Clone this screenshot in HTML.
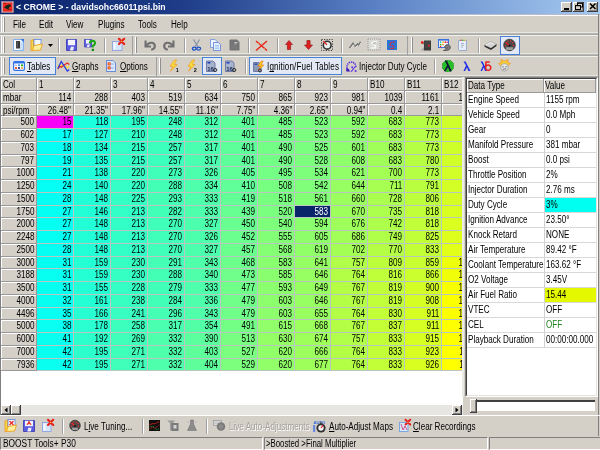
<!DOCTYPE html>
<html><head><meta charset="utf-8">
<style>
*{margin:0;padding:0;box-sizing:border-box}
html,body{width:600px;height:450px;overflow:hidden;background:#d4d0c8;font-family:"Liberation Sans",sans-serif;font-size:8px;color:#000}
.a{position:absolute}
.t{position:absolute;white-space:nowrap;line-height:10px;font-size:10px;transform:scaleX(0.81);transform-origin:0 0}
.hc{position:absolute;background:#d4d0c8;border-right:1px solid #999;border-bottom:1px solid #999;box-shadow:inset 1px 1px 0 #fff}
.dc{position:absolute;border-right:1px solid #b8c8c0;border-bottom:1px solid #b8c8c0}
.cell{position:absolute;white-space:nowrap;line-height:12px;text-align:right;padding-right:2px;font-size:10px;transform:scaleX(0.81);transform-origin:100% 0}
.sep{position:absolute;width:2px;border-left:1px solid #a0a0a0;border-right:1px solid #fff}
.grip{position:absolute;width:2px;border-left:1px solid #fff;border-right:1px solid #909090}
u{text-decoration-skip-ink:none}
.hot{position:absolute;border:1px solid #4a7fd8;background:#e2e8f4}
.rp{position:absolute;white-space:nowrap;line-height:14px;padding-left:3px}
</style></head><body><div style="position:absolute;left:0;top:0;width:600px;height:450px;will-change:transform">

<div class="a" style="left:0;top:0;width:600px;height:14px;background:linear-gradient(90deg,#0a246a 0%,#1e3c88 30%,#5a80c4 62%,#a6caf0 100%)"></div>
<div class="a" style="left:2px;top:1px;width:12px;height:12px;background:#c02020;border:1px solid #600"></div>
<div class="t" style="left:16px;top:2px;color:#fff;font-weight:bold;font-size:8.7px;transform:none">&lt; CROME &gt; - davidsohc66011psi.bin</div>
<div class="a" style="left:561px;top:2px;width:11px;height:10px;background:#d4d0c8;border-right:1px solid #404040;border-bottom:1px solid #404040;box-shadow:inset 1px 1px 0 #fff,inset -1px -1px 0 #808080"></div>
<div class="a" style="left:573px;top:2px;width:11px;height:10px;background:#d4d0c8;border-right:1px solid #404040;border-bottom:1px solid #404040;box-shadow:inset 1px 1px 0 #fff,inset -1px -1px 0 #808080"></div>
<div class="a" style="left:587px;top:2px;width:11px;height:10px;background:#d4d0c8;border-right:1px solid #404040;border-bottom:1px solid #404040;box-shadow:inset 1px 1px 0 #fff,inset -1px -1px 0 #808080"></div>
<div class="a" style="left:0;top:14px;width:600px;height:1px;background:#b8bcc8"></div>
<div class="a" style="left:1px;top:15px;width:597px;height:1px;background:#fff"></div>
<div class="a" style="left:0;top:15px;width:1px;height:62px;background:#c0c0c0"></div>
<div class="a" style="left:1px;top:15px;width:1px;height:62px;background:#fff"></div>
<div class="a" style="left:598px;top:14px;width:1px;height:422px;background:#808080"></div>
<div class="grip" style="left:3px;top:17px;height:15px"></div>
<div class="t" style="left:13px;top:20px">File</div>
<div class="t" style="left:39px;top:20px">Edit</div>
<div class="t" style="left:66px;top:20px">View</div>
<div class="t" style="left:98px;top:20px">Plugins</div>
<div class="t" style="left:138px;top:20px">Tools</div>
<div class="t" style="left:171px;top:20px">Help</div>
<div class="a" style="left:0;top:32px;width:598px;height:1px;background:#e6e6de"></div>
<div class="a" style="left:0;top:33px;width:598px;height:1px;background:#b8b8b4"></div>
<div class="a" style="left:0;top:34px;width:598px;height:1px;background:#a8a8a4"></div>
<div class="a" style="left:0;top:35px;width:598px;height:1px;background:#f0f0ea"></div>
<div class="a" style="left:0;top:53px;width:598px;height:1px;background:#e6e6de"></div>
<div class="a" style="left:0;top:54px;width:598px;height:1px;background:#b8b8b4"></div>
<div class="a" style="left:0;top:55px;width:598px;height:1px;background:#a8a8a4"></div>
<div class="a" style="left:0;top:56px;width:598px;height:1px;background:#f0f0ea"></div>
<div class="a" style="left:0;top:75px;width:598px;height:1px;background:#e6e6de"></div>
<div class="a" style="left:0;top:76px;width:598px;height:1px;background:#a8a8a4"></div>
<div class="grip" style="left:3px;top:37px;height:16px"></div>
<div class="grip" style="left:135px;top:37px;height:16px"></div>
<div class="grip" style="left:411px;top:37px;height:16px"></div>
<div class="a" style="left:132px;top:36px;width:1px;height:19px;background:#a0a0a0"></div>
<div class="a" style="left:407px;top:36px;width:1px;height:19px;background:#a0a0a0"></div>
<div class="sep" style="left:58px;top:38px;height:15px"></div>
<div class="sep" style="left:104px;top:38px;height:15px"></div>
<div class="sep" style="left:184px;top:38px;height:15px"></div>
<div class="sep" style="left:248px;top:38px;height:15px"></div>
<div class="sep" style="left:277px;top:38px;height:15px"></div>
<div class="sep" style="left:341px;top:38px;height:15px"></div>
<div class="sep" style="left:478px;top:38px;height:15px"></div>
<div class="hot" style="left:500px;top:36px;width:20px;height:19px"></div>
<div class="grip" style="left:3px;top:58px;height:16px"></div>
<div class="grip" style="left:159px;top:58px;height:16px"></div>
<div class="a" style="left:156px;top:57px;width:1px;height:19px;background:#a0a0a0"></div>
<div class="sep" style="left:245px;top:59px;height:15px"></div>
<div class="sep" style="left:434px;top:59px;height:15px"></div>
<div class="hot" style="left:9px;top:57px;width:47px;height:18px"></div>
<div class="hot" style="left:202px;top:57px;width:20px;height:18px"></div>
<div class="hot" style="left:249px;top:57px;width:93px;height:18px"></div>
<div class="t" style="left:27px;top:62px"><u>T</u>ables</div>
<div class="t" style="left:72px;top:62px"><u>G</u>raphs</div>
<div class="t" style="left:120px;top:62px"><u>O</u>ptions</div>
<div class="t" style="left:267px;top:62px"><span style="letter-spacing:0.15px">I<u>g</u>nition/Fuel Tables</span></div>
<div class="t" style="left:359px;top:62px">Injector Duty Cycle</div>
<svg class="a" style="left:1px;top:1px;overflow:visible" width="13" height="12" viewBox="0 0 13 12"><rect x="0.6" y="0.5" width="11.8" height="11" fill="#c8b8c8" stroke="#9890a8" stroke-width="0.7"/><rect x="1.8" y="1.5" width="9.6" height="9.2" fill="#ee2a20"/><path d="M3,6.5 L5,4.5 L8,3.2 L10,4 L9.5,5.5 L8,6.5 L7.5,9 L6,8 L4.5,7.2Z" fill="#102818"/><path d="M2.5,2.5 L5,2.5 M8,8.5 L10.5,8.5" stroke="#a01010" stroke-width="0.8"/></svg>
<svg class="a" style="left:561px;top:1px;overflow:visible" width="12" height="11" viewBox="0 0 12 11"><rect x="3" y="7" width="5" height="2" fill="#000"/></svg>
<svg class="a" style="left:573px;top:1px;overflow:visible" width="12" height="11" viewBox="0 0 12 11"><rect x="4.5" y="2" width="5" height="4" fill="none" stroke="#000" stroke-width="1"/><rect x="4" y="1.5" width="6" height="1.2" fill="#000"/><rect x="2.5" y="4.5" width="5" height="4" fill="#d4d0c8" stroke="#000" stroke-width="1"/><rect x="2" y="4" width="6" height="1.2" fill="#000"/></svg>
<svg class="a" style="left:587px;top:1px;overflow:visible" width="12" height="11" viewBox="0 0 12 11"><path d="M3,2.5 L8.5,8 M8.5,2.5 L3,8" stroke="#000" stroke-width="1.5"/></svg>
<svg class="a" style="left:13px;top:39px;overflow:visible" width="11" height="12" viewBox="0 0 11 12"><path d="M0.5,0.5 L8,0.5 L10.5,3 L10.5,11.5 L0.5,11.5Z" fill="#f6faff" stroke="#78aaf0" stroke-width="0.9"/><rect x="7" y="3" width="3" height="8" fill="#c8e0fa"/><rect x="3" y="2" width="4" height="7.5" fill="#383838"/><rect x="3.6" y="2.5" width="1" height="6" fill="#6a6a6a"/><path d="M7.5,0 L11,0 L11,3.5Z" fill="#3a78e8"/></svg>
<svg class="a" style="left:30px;top:39px;overflow:visible" width="13" height="12" viewBox="0 0 13 12"><path d="M1,1.5 L3.5,0.5 L3.5,11 L1,11.5Z" fill="#f8d848" stroke="#f09818" stroke-width="0.8"/><rect x="4" y="0.5" width="7" height="6.5" fill="#f2f8ff" stroke="#5a88e0" stroke-width="0.8"/><path d="M2.5,11.5 L4,6.5 L12.5,5 L10.5,11Z" fill="#faf0a0" stroke="#f0a018" stroke-width="0.9"/></svg>
<svg class="a" style="left:48px;top:44px;overflow:visible" width="5" height="3" viewBox="0 0 5 3"><path d="M0,0 L5,0 L2.5,3Z" fill="#000"/></svg>
<svg class="a" style="left:66px;top:39px;overflow:visible" width="11" height="12" viewBox="0 0 11 12"><path d="M0.5,0.5 L10.5,0.5 L10.5,11.5 L0.5,11.5Z" fill="#5c5ce0" stroke="#3434b0" stroke-width="0.8"/><rect x="2" y="0.8" width="7" height="5.4" fill="#f4f4fa"/><path d="M3.8,11.5 L5.0,7.8 L7.9,7.8 L7.2,11.5Z" fill="#f0f0f8"/></svg>
<svg class="a" style="left:84px;top:39px;overflow:visible" width="13" height="12" viewBox="0 0 13 12"><g><path d="M0.5,0.5 L7.5,0.5 L7.5,8.0 L0.5,8.0Z" fill="#6464e0" stroke="#4040b8" stroke-width="0.8"/><rect x="2" y="0.8" width="4" height="3.8" fill="#f4f4fa"/><path d="M2.8,8.0 L3.6,5.5 L5.8,5.5 L5.2,8.0Z" fill="#f0f0f8"/></g><path d="M5.8,4.3 Q6,1.8 8.5,1.8 Q11.2,2 11,4.5 Q10.5,6.3 8.8,6.8 L8.8,8.5" fill="none" stroke="#18a818" stroke-width="2.1"/><rect x="7.7" y="9.8" width="2.3" height="2.2" fill="#108810"/></svg>
<svg class="a" style="left:112px;top:38px;overflow:visible" width="13" height="13" viewBox="0 0 13 13"><rect x="0.5" y="3.5" width="9.5" height="9" fill="#d4e6fa" stroke="#8a9ae0" stroke-width="0.8"/><rect x="1.5" y="4.5" width="2" height="7" fill="#f4faff"/><path d="M7,0.8 L12.2,6 M12.2,0.8 L7,6" stroke="#e82018" stroke-width="2.2" stroke-linecap="round"/><circle cx="9.6" cy="3.4" r="0.7" fill="#f8c020"/></svg>
<svg class="a" style="left:144px;top:40px;overflow:visible" width="12" height="10" viewBox="0 0 12 10"><path d="M0.5,0.5 L2.6,0.5 L2.6,5.4 L7,5.4 L7,7.6 L0.5,7.6Z" fill="#707070"/><path d="M2,6 Q4.5,2.2 8.2,2.8 Q11.3,3.8 10.8,6.8 Q10.2,9.2 7.2,9.8" fill="none" stroke="#707070" stroke-width="2.1"/></svg>
<svg class="a" style="left:163px;top:40px;overflow:visible" width="12" height="10" viewBox="0 0 12 10"><g transform="translate(12,0) scale(-1,1)"><path d="M0.5,0.5 L2.6,0.5 L2.6,5.4 L7,5.4 L7,7.6 L0.5,7.6Z" fill="#707070"/><path d="M2,6 Q4.5,2.2 8.2,2.8 Q11.3,3.8 10.8,6.8 Q10.2,9.2 7.2,9.8" fill="none" stroke="#707070" stroke-width="2.1"/></g></svg>
<svg class="a" style="left:192px;top:39px;overflow:visible" width="9" height="12" viewBox="0 0 9 12"><path d="M1.5,0.5 L5.8,7.5 M7.5,0.5 L3.2,7.5" stroke="#8894a8" stroke-width="1.3"/><ellipse cx="2.3" cy="9.6" rx="1.9" ry="1.5" fill="none" stroke="#1a50c8" stroke-width="1.3"/><ellipse cx="6.7" cy="9.6" rx="1.9" ry="1.5" fill="none" stroke="#1a50c8" stroke-width="1.3"/></svg>
<svg class="a" style="left:210px;top:39px;overflow:visible" width="11" height="12" viewBox="0 0 11 12"><path d="M0.5,0.5 L5,0.5 L7,2.5 L7,8.5 L0.5,8.5Z" fill="#eef4ff" stroke="#6a8ee0" stroke-width="0.8"/><path d="M3.5,3.5 L8.5,3.5 L10.5,5.5 L10.5,11.5 L3.5,11.5Z" fill="#e4eefc" stroke="#5a80d8" stroke-width="0.8"/><path d="M5,6.5 L9,6.5 M5,8 L9,8 M5,9.5 L9,9.5" stroke="#90b4f0" stroke-width="0.7"/></svg>
<svg class="a" style="left:229px;top:39px;overflow:visible" width="11" height="12" viewBox="0 0 11 12"><path d="M1.5,0.5 L8,0.5 L10.5,3 L10.5,11.5 L1.5,11.5 Q0.5,11.5 0.5,10.5 L0.5,1.5 Q0.5,0.5 1.5,0.5Z" fill="#747474"/><path d="M5.5,3.5 L8.5,3.5 M5.5,4.8 L7.5,4.8" stroke="#d8d8d8" stroke-width="0.8"/><path d="M2,7 L9,7 M2,9 L9,9" stroke="#888" stroke-width="0.6"/></svg>
<svg class="a" style="left:255px;top:40px;overflow:visible" width="13" height="11" viewBox="0 0 13 11"><path d="M1,1 L12,10.5 M12,1 L1,10.5" stroke="#e82818" stroke-width="1.5"/><path d="M3,3 L4,4 M9,8 L10,9" stroke="#f8a030" stroke-width="0.8"/></svg>
<svg class="a" style="left:285px;top:40px;overflow:visible" width="8" height="10" viewBox="0 0 8 10"><path d="M4,0.5 L7.5,4.5 L5.6,4.5 L5.6,9.5 L2.4,9.5 L2.4,4.5 L0.5,4.5Z" fill="#e02020" stroke="#8a1010" stroke-width="0.6"/></svg>
<svg class="a" style="left:304px;top:40px;overflow:visible" width="9" height="10" viewBox="0 0 9 10"><path d="M4.5,9.5 L8.5,5 L6.1,5 L6.1,0.5 L2.9,0.5 L2.9,5 L0.5,5Z" fill="#e02020" stroke="#8a1010" stroke-width="0.6"/></svg>
<svg class="a" style="left:321px;top:39px;overflow:visible" width="12" height="12" viewBox="0 0 12 12"><rect x="0.5" y="0.5" width="11" height="11" fill="none" stroke="#202020" stroke-width="0.8" stroke-dasharray="1.2 1.3"/><circle cx="6.2" cy="6.2" r="3.9" fill="#e8f0f0" stroke="#303030" stroke-width="1.6"/><path d="M2.2,2.2 L6,5.8" stroke="#f02020" stroke-width="1.2"/></svg>
<svg class="a" style="left:349px;top:41px;overflow:visible" width="12" height="8" viewBox="0 0 12 8"><path d="M0.5,7.2 L4,2.2 L6,5.5 L8.7,2.8 L9.5,4.5 L11.5,0.8" fill="none" stroke="#6a6a6a" stroke-width="1.3"/><path d="M1.5,7.8 L4.5,3.5 L6.5,6.5 L9,4 L9.8,5.5 L11.8,2" fill="none" stroke="#fff" stroke-width="0.5" opacity="0.8"/></svg>
<svg class="a" style="left:368px;top:39px;overflow:visible" width="12" height="11" viewBox="0 0 12 11"><rect x="0" y="0" width="12" height="11" fill="#d8d8d4"/><path d="M0,0 h12 M0,11 h12 M0,0 v11 M12,0 v11" stroke="#9a9a9a" stroke-width="1" stroke-dasharray="1 1"/><path d="M9,2.5 Q3,2.5 4,5.2 Q9,6.5 7,9 L3,9" fill="none" stroke="#f8f8f8" stroke-width="1.6"/><path d="M8,3.5 Q4,3.8 5,5.6" fill="none" stroke="#909090" stroke-width="0.6"/></svg>
<svg class="a" style="left:387px;top:40px;overflow:visible" width="10" height="10" viewBox="0 0 10 10"><rect x="0" y="0" width="10" height="10" fill="#2a72e0"/><path d="M7.5,2 Q2,2 3.2,5 Q8.2,5.8 6.2,8.5 L2.5,8.5" fill="none" stroke="#e02828" stroke-width="1.3" stroke-dasharray="1.3 0.6"/><circle cx="1.8" cy="2" r="0.6" fill="#20b040"/><circle cx="8.5" cy="4" r="0.6" fill="#20b040"/><circle cx="1.8" cy="7" r="0.6" fill="#20b040"/><circle cx="8.3" cy="8.3" r="0.6" fill="#20b040"/></svg>
<svg class="a" style="left:420px;top:40px;overflow:visible" width="11" height="11" viewBox="0 0 11 11"><rect x="4" y="0.5" width="7" height="10" fill="#3c3c3c"/><path d="M5,3 h5 M5,5 h5 M5,7 h5" stroke="#5a5a5a" stroke-width="0.6"/><path d="M0.5,10.5 L4,7 L4,10.5Z" fill="#a8a8a8"/><path d="M1,2 L4,2 L4,4.5 L2,4" fill="#7a7a7a"/><circle cx="2.2" cy="2.4" r="1.3" fill="#f02020"/><circle cx="8.8" cy="5.6" r="1" fill="#f02020"/></svg>
<svg class="a" style="left:438px;top:39px;overflow:visible" width="13" height="12" viewBox="0 0 13 12"><rect x="0.5" y="0.5" width="10" height="8" fill="#f4f6ff" stroke="#3a70e0" stroke-width="1"/><rect x="0" y="0" width="11" height="1.6" fill="#3a70e0"/><circle cx="2.6" cy="3.2" r="0.9" fill="#20c8c0"/><circle cx="5" cy="3.2" r="0.9" fill="#f8c020"/><circle cx="7.4" cy="3.2" r="0.9" fill="#f02020"/><circle cx="9.3" cy="3.2" r="0.8" fill="#d03090"/><circle cx="2.6" cy="5.6" r="0.9" fill="#20c020"/><circle cx="5" cy="5.6" r="0.9" fill="#f09020"/><circle cx="2.6" cy="7.6" r="0.8" fill="#f02020"/><path d="M5.2,11.5 Q12.8,12 12.3,8 Q11.6,4.8 8.2,5.8 Q5.6,7.2 7.6,9.4 Q9.4,10 9.6,8.2" fill="#7c7c7c" stroke="#5c5c5c" stroke-width="1"/></svg>
<svg class="a" style="left:458px;top:39px;overflow:visible" width="9" height="12" viewBox="0 0 9 12"><path d="M0.5,1.5 L8.5,1.5 L8.5,11.5 L1.5,11.5 L0.5,10.5Z" fill="#e6ecf8" stroke="#8aa0c8" stroke-width="0.8"/><circle cx="3" cy="1.2" r="0.8" fill="#f04040"/><circle cx="4.8" cy="1.2" r="0.8" fill="#40c040"/><circle cx="6.5" cy="1.2" r="0.8" fill="#f0c020"/><path d="M3,4.5 L6,4.5 M3,6.3 L6,6.3 M3,8.1 L5,8.1" stroke="#a0b0c8" stroke-width="0.9"/></svg>
<svg class="a" style="left:484px;top:41px;overflow:visible" width="13" height="9" viewBox="0 0 13 9"><path d="M0.5,4.2 L6,0.5 L12.5,3.2 L7,7.2Z" fill="#d4d4d4" stroke="#9a9a9a" stroke-width="0.6"/><path d="M2,4 L6,1.5 L10,3.2" fill="none" stroke="#f4f4f4" stroke-width="0.8"/><path d="M0.5,4.2 L7,7.2 L12.5,3.2 L12.5,5 L7,9 L0.5,5.8Z" fill="#2c2c2c"/></svg>
<svg class="a" style="left:503px;top:39px;overflow:visible" width="13" height="12" viewBox="0 0 13 12"><circle cx="6.5" cy="6.0" r="5.8" fill="#4a4a4a" stroke="#2a2a2a" stroke-width="0.7"/><path d="M2.7,8.2 L10.3,8.2 L9.5,10.9 L3.5,10.9Z" fill="#a0a0a0"/><circle cx="2.46" cy="6.71" r="0.7" fill="#ff2a2a"/><circle cx="3.14" cy="3.65" r="0.7" fill="#ff2a2a"/><circle cx="5.10" cy="2.15" r="0.7" fill="#ff2a2a"/><circle cx="7.90" cy="2.15" r="0.7" fill="#ff2a2a"/><circle cx="9.86" cy="3.65" r="0.7" fill="#ff2a2a"/><circle cx="10.54" cy="6.71" r="0.7" fill="#ff2a2a"/><path d="M3.3,3.5 L6.5,6.5" stroke="#ff2020" stroke-width="1.1"/><circle cx="6.5" cy="6.5" r="1" fill="#101010"/></svg>
<svg class="a" style="left:13px;top:61px;overflow:visible" width="12" height="10" viewBox="0 0 12 10"><rect x="0.6" y="0.6" width="10.8" height="8.8" rx="1.4" fill="#fff" stroke="#2e72e8" stroke-width="1.2"/><rect x="0.6" y="0.6" width="10.8" height="2" rx="1" fill="#2e72e8"/><circle cx="3" cy="4.3" r="0.8" fill="#9090e8"/><circle cx="6" cy="4.3" r="1" fill="#2088e8"/><circle cx="9" cy="4.3" r="1.1" fill="#18a818"/><circle cx="3" cy="7" r="1.1" fill="#e83810"/><circle cx="6" cy="7" r="1.1" fill="#102080"/><circle cx="9" cy="7" r="1.1" fill="#f0a020"/></svg>
<svg class="a" style="left:57px;top:61px;overflow:visible" width="13" height="11" viewBox="0 0 13 11"><path d="M0.5,5 L3.8,4 L6.3,5.5 L8.8,5 L10.3,7 L12,5" fill="none" stroke="#f8e020" stroke-width="1.1"/><path d="M0.8,8 L2.8,5.3 L4.3,6.3 L7.3,4 L10.3,2 L12.3,3.5" fill="none" stroke="#e82020" stroke-width="1.1"/><path d="M0.8,7.5 L4.3,0.5 L10.3,10 L12.3,8.5" fill="none" stroke="#2838e8" stroke-width="1.3"/></svg>
<svg class="a" style="left:106px;top:60px;overflow:visible" width="10" height="12" viewBox="0 0 10 12"><path d="M0.5,0.5 L7,0.5 L9.5,3 L9.5,11.5 L0.5,11.5Z" fill="#dce8fc" stroke="#5a82d8" stroke-width="0.9"/><rect x="2" y="2.8" width="2.2" height="2.2" fill="#f8c020" stroke="#e02020" stroke-width="0.7"/><rect x="2" y="6.8" width="2.2" height="2.2" fill="#f8c020" stroke="#e02020" stroke-width="0.7"/><path d="M5,4 L8,4 M5,8 L8,8" stroke="#7aa0e0" stroke-width="0.8"/></svg>
<svg class="a" style="left:169px;top:60px;overflow:visible" width="11" height="12" viewBox="0 0 11 12"><path d="M5.5,0 L1,6.2 L4,6.2 L1.5,11.2 L8.2,4.6 L5.2,4.6 L7.6,0Z" fill="#f8e040" stroke="#f09818" stroke-width="0.7"/><text x="6.8" y="11.6" font-size="5.5" font-weight="bold" font-family="Liberation Sans" fill="#101010">1</text></svg>
<svg class="a" style="left:187px;top:60px;overflow:visible" width="11" height="12" viewBox="0 0 11 12"><path d="M5.5,0 L1,6.2 L4,6.2 L1.5,11.2 L8.2,4.6 L5.2,4.6 L7.6,0Z" fill="#f8e040" stroke="#f09818" stroke-width="0.7"/><text x="6.8" y="11.6" font-size="5.5" font-weight="bold" font-family="Liberation Sans" fill="#101010">2</text></svg>
<svg class="a" style="left:206px;top:60px;overflow:visible" width="11" height="12" viewBox="0 0 11 12"><path d="M0.5,1 L7,1 L9,3 L9,11.5 L0.5,11.5Z" fill="#a8b4cc" stroke="#5a6a98" stroke-width="0.8"/><rect x="1.5" y="2" width="3" height="1.5" fill="#2040c0"/><text x="1.3" y="10.8" font-size="6" font-weight="bold" font-family="Liberation Sans" fill="#18285a">1</text><text x="4.5" y="10.8" font-size="6" font-weight="bold" font-family="Liberation Sans" fill="#18285a">6</text><circle cx="9.2" cy="10" r="1.6" fill="none" stroke="#202020" stroke-width="0.9"/></svg>
<svg class="a" style="left:225px;top:60px;overflow:visible" width="11" height="12" viewBox="0 0 11 12"><path d="M0.5,1 L7,1 L9,3 L9,11.5 L0.5,11.5Z" fill="#a8b4cc" stroke="#5a6a98" stroke-width="0.8"/><rect x="1.5" y="2" width="3" height="1.5" fill="#2040c0"/><text x="1.3" y="10.8" font-size="6" font-weight="bold" font-family="Liberation Sans" fill="#18285a">1</text><text x="4.5" y="10.8" font-size="6" font-weight="bold" font-family="Liberation Sans" fill="#18285a">6</text><circle cx="9.2" cy="10" r="1.6" fill="none" stroke="#202020" stroke-width="0.9"/></svg>
<svg class="a" style="left:253px;top:61px;overflow:visible" width="11" height="11" viewBox="0 0 11 11"><path d="M0.5,1.5 L6,1.5 L8,3.5 L8,10.5 L0.5,10.5Z" fill="#8a9ab8" stroke="#5a6a98" stroke-width="0.8"/><rect x="1.5" y="2.5" width="3" height="1.5" fill="#3050b0"/><path d="M8.2,0 L5,5 L7.5,5 L5,10 L10.8,4 L8.2,4 L10.2,0Z" fill="#f8d020" stroke="#f07010" stroke-width="0.6"/><circle cx="7" cy="9.5" r="1.5" fill="none" stroke="#202020" stroke-width="0.8"/></svg>
<svg class="a" style="left:346px;top:61px;overflow:visible" width="11" height="11" viewBox="0 0 11 11"><path d="M3,9.2 A4.4,4.4 0 1,1 9.6,6.8" fill="none" stroke="#5a30e0" stroke-width="1.5" stroke-dasharray="1.4 0.7"/><path d="M0.3,6.2 L4.6,10.6 L0.3,10.6Z" fill="#3a18c0"/><path d="M9.8,5 L5.2,10.6" stroke="#5a30e0" stroke-width="1.1"/><circle cx="6.2" cy="6.2" r="1" fill="#5a30e0"/><circle cx="9.6" cy="10" r="1" fill="#5a30e0"/></svg>
<svg class="a" style="left:442px;top:60px;overflow:visible" width="12" height="12" viewBox="0 0 12 12"><path d="M3.5,0.5 L8.5,0.5 L11.5,3.5 L11.5,8.5 L8.5,11.5 L3.5,11.5 L0.5,8.5 L0.5,3.5Z" fill="#28c028" stroke="#108810" stroke-width="0.8" stroke-dasharray="1 0.5"/><path d="M2.8,0.8 L5,0.8 L9.8,11.2 L7.6,11.2 L6,7.2 L3.6,11.2 L1.8,11.2 L5.1,5.2Z" fill="#101838"/></svg>
<svg class="a" style="left:463px;top:61px;overflow:visible" width="8" height="10" viewBox="0 0 8 10"><path d="M0.5,0.5 L2.6,0.5 L7.5,10 L5.4,10 L4,6.6 L2,10 L0.5,10 L3,4.6Z" fill="#2030e8"/></svg>
<svg class="a" style="left:480px;top:61px;overflow:visible" width="11" height="10" viewBox="0 0 11 10"><path d="M0.5,0.5 L2.6,0.5 L7,10 L5,10 L3.8,6.6 L2,10 L0.5,10 L3,4.6Z" fill="#2030e8"/><path d="M9.8,0.9 L6,0.9 L5.6,5 M5.6,6.7 A2.6,2.6 0 1,0 10.8,6.7 A2.6,2.6 0 1,0 5.6,6.7" fill="none" stroke="#e82020" stroke-width="1.5"/></svg>
<svg class="a" style="left:498px;top:59px;overflow:visible" width="13" height="13" viewBox="0 0 13 13"><path d="M0.5,4.5 L3.5,3.5 L2.8,0.5 L6.5,2.2 L10,0.5 L9.6,3.5 L12.5,4.5 L10.2,6.5 L2.8,6.5Z" fill="#f8d030" stroke="#f09020" stroke-width="0.7"/><circle cx="6.5" cy="8.3" r="3.8" fill="#e4e4e4" stroke="#9a9a9a" stroke-width="0.7"/><circle cx="5" cy="7.8" r="0.6" fill="#404040"/><circle cx="8" cy="7.8" r="0.6" fill="#404040"/><path d="M4.8,10.3 L8.2,9.8" stroke="#404040" stroke-width="0.7"/></svg>
<svg class="a" style="left:4px;top:419px;overflow:visible" width="13" height="13" viewBox="0 0 13 13"><path d="M1,2 L3.5,1 L3.5,12 L1,12.5Z" fill="#f8d848" stroke="#f09818" stroke-width="0.8"/><rect x="4" y="0.5" width="7" height="7" fill="#f2f8ff" stroke="#5a88e0" stroke-width="0.8"/><path d="M5.5,2 L9.5,6 M9.5,2 L5.5,6" stroke="#e82020" stroke-width="1.1"/><path d="M2.5,12.5 L4,7.5 L12.5,6 L10.5,12Z" fill="#faf0a0" stroke="#f0a018" stroke-width="0.9"/></svg>
<svg class="a" style="left:23px;top:420px;overflow:visible" width="12" height="12" viewBox="0 0 12 12"><path d="M0.5,0.5 L11.5,0.5 L11.5,11.5 L0.5,11.5Z" fill="#5c5ce0" stroke="#3434b0" stroke-width="0.8"/><rect x="2" y="0.8" width="8" height="5.4" fill="#f4f4fa"/><path d="M4.2,11.5 L5.4,7.8 L8.6,7.8 L7.8,11.5Z" fill="#f0f0f8"/><path d="M4,5 L6,1.3 L8,5 M4.8,3.7 L7.2,3.7" stroke="#e82020" stroke-width="1" fill="none"/></svg>
<svg class="a" style="left:42px;top:419px;overflow:visible" width="12" height="13" viewBox="0 0 12 13"><rect x="0.5" y="3.5" width="8.5" height="9" fill="#d4e6fa" stroke="#8a9ae0" stroke-width="0.8"/><rect x="1.5" y="4.5" width="2" height="7" fill="#f4faff"/><path d="M6,0.8 L11.2,6 M11.2,0.8 L6,6" stroke="#e82018" stroke-width="2.2" stroke-linecap="round"/><circle cx="8.6" cy="3.4" r="0.7" fill="#f8c020"/></svg>
<svg class="a" style="left:69px;top:420px;overflow:visible" width="12" height="11" viewBox="0 0 12 11"><circle cx="6.0" cy="5.5" r="5.3" fill="#4a4a4a" stroke="#2a2a2a" stroke-width="0.7"/><path d="M2.7,7.7 L9.3,7.7 L8.5,9.9 L3.5,9.9Z" fill="#a0a0a0"/><circle cx="2.45" cy="6.13" r="0.7" fill="#ff2a2a"/><circle cx="3.05" cy="3.44" r="0.7" fill="#ff2a2a"/><circle cx="4.77" cy="2.12" r="0.7" fill="#ff2a2a"/><circle cx="7.23" cy="2.12" r="0.7" fill="#ff2a2a"/><circle cx="8.95" cy="3.44" r="0.7" fill="#ff2a2a"/><circle cx="9.55" cy="6.13" r="0.7" fill="#ff2a2a"/><path d="M2.8,3.0 L6.0,6.0" stroke="#ff2020" stroke-width="1.1"/><circle cx="6.0" cy="6.0" r="1" fill="#101010"/></svg>
<svg class="a" style="left:149px;top:420px;overflow:visible" width="11" height="11" viewBox="0 0 11 11"><rect x="0" y="0" width="11" height="11" fill="#101010"/><path d="M0.5,5 L3,3.5 L6,3.8 L10.5,1.5" stroke="#e82020" stroke-width="1.1" stroke-dasharray="1 0.6" fill="none"/><path d="M0.5,9 L3,7.5 L6,8 L10.5,5" stroke="#d82020" stroke-width="1" stroke-dasharray="1 0.8" fill="none"/><path d="M0.5,7 L4,6 L7,9.5 L10.5,8.8" stroke="#20b030" stroke-width="0.9" stroke-dasharray="1 1" fill="none"/></svg>
<svg class="a" style="left:167px;top:420px;overflow:visible" width="12" height="11" viewBox="0 0 12 11"><path d="M0,0.5 L8,0.5 L6,3 L6,10.5 L3,10.5 L3,3Z" fill="#9a9a9a"/><rect x="4.5" y="3" width="7" height="8" fill="#7a7a7a"/><rect x="6.5" y="5" width="3" height="3.5" fill="#d4d4d4"/></svg>
<svg class="a" style="left:187px;top:419px;overflow:visible" width="10" height="13" viewBox="0 0 10 13"><path d="M3.5,1 L6.5,1 L6.5,5 L9.5,11.5 L0.5,11.5 L3.5,5Z" fill="#8a8a8a" stroke="#777" stroke-width="0.6"/><path d="M0.5,2 L2,4 M9.5,2 L8,4" stroke="#b0b0b0" stroke-width="0.8"/></svg>
<svg class="a" style="left:213px;top:420px;overflow:visible" width="13" height="11" viewBox="0 0 13 11"><rect x="0.5" y="0.5" width="8" height="5" fill="#d8d8d8" stroke="#a0a0a0" stroke-width="0.8"/><path d="M1.5,2 h6 M1.5,3.5 h6" stroke="#b8b8b8" stroke-width="0.5"/><circle cx="8" cy="6.5" r="4.3" fill="#7c7c7c"/><circle cx="8" cy="6.5" r="2.2" fill="#8c8c8c"/></svg>
<svg class="a" style="left:313px;top:420px;overflow:visible" width="14" height="13" viewBox="0 0 14 13"><text x="0.5" y="4" font-size="4.2" font-weight="bold" font-family="Liberation Sans" fill="#3468d8">AUTO</text><rect x="0" y="5" width="2.2" height="7" fill="#6a8ae0"/><circle cx="8" cy="8" r="4.6" fill="#303030"/><circle cx="8" cy="8" r="2.7" fill="#f4f4f4"/><path d="M8,8 L10,5.3" stroke="#e82020" stroke-width="1.1"/><rect x="6.8" y="2.5" width="2.4" height="1.2" fill="#303030"/></svg>
<svg class="a" style="left:399px;top:419px;overflow:visible" width="12" height="13" viewBox="0 0 12 13"><rect x="0.5" y="3.5" width="8.5" height="9" fill="#d8e8f8" stroke="#6a9ae0" stroke-width="0.8"/><path d="M2,5 L4,11 L6,7 L8,11" fill="none" stroke="#d03070" stroke-width="0.8"/><path d="M6.5,0.8 L11.2,5.5 M11.2,0.8 L6.5,5.5" stroke="#e82020" stroke-width="2" stroke-linecap="round"/><circle cx="8.85" cy="3.15" r="0.6" fill="#f8c020"/></svg>
<div class="a" style="left:0;top:77px;width:463px;height:338px;background:#fff;border-left:1px solid #808080;border-top:1px solid #b8b8b4"></div>
<div class="a" style="left:0;top:77px;width:462px;height:295px;overflow:hidden">
<div class="hc" style="left:1px;top:1.0px;width:36px;height:12.75px"><div class="t" style="left:2px;top:2px">Col</div></div>
<div class="hc" style="left:1px;top:13.75px;width:36px;height:12.75px"><div class="t" style="left:2px;top:2px">mbar</div></div>
<div class="hc" style="left:1px;top:26.5px;width:36px;height:12.75px"><div class="t" style="left:2px;top:2px">psi/rpm</div></div>
<div class="hc" style="left:1px;top:39.25px;width:36px;height:12.75px"><div class="cell" style="right:0;top:0">500</div></div>
<div class="hc" style="left:1px;top:52.0px;width:36px;height:12.75px"><div class="cell" style="right:0;top:0">602</div></div>
<div class="hc" style="left:1px;top:64.75px;width:36px;height:12.75px"><div class="cell" style="right:0;top:0">703</div></div>
<div class="hc" style="left:1px;top:77.5px;width:36px;height:12.75px"><div class="cell" style="right:0;top:0">797</div></div>
<div class="hc" style="left:1px;top:90.25px;width:36px;height:12.75px"><div class="cell" style="right:0;top:0">1000</div></div>
<div class="hc" style="left:1px;top:103.0px;width:36px;height:12.75px"><div class="cell" style="right:0;top:0">1250</div></div>
<div class="hc" style="left:1px;top:115.75px;width:36px;height:12.75px"><div class="cell" style="right:0;top:0">1500</div></div>
<div class="hc" style="left:1px;top:128.5px;width:36px;height:12.75px"><div class="cell" style="right:0;top:0">1750</div></div>
<div class="hc" style="left:1px;top:141.25px;width:36px;height:12.75px"><div class="cell" style="right:0;top:0">2000</div></div>
<div class="hc" style="left:1px;top:154.0px;width:36px;height:12.75px"><div class="cell" style="right:0;top:0">2248</div></div>
<div class="hc" style="left:1px;top:166.75px;width:36px;height:12.75px"><div class="cell" style="right:0;top:0">2500</div></div>
<div class="hc" style="left:1px;top:179.5px;width:36px;height:12.75px"><div class="cell" style="right:0;top:0">3000</div></div>
<div class="hc" style="left:1px;top:192.25px;width:36px;height:12.75px"><div class="cell" style="right:0;top:0">3188</div></div>
<div class="hc" style="left:1px;top:205.0px;width:36px;height:12.75px"><div class="cell" style="right:0;top:0">3500</div></div>
<div class="hc" style="left:1px;top:217.75px;width:36px;height:12.75px"><div class="cell" style="right:0;top:0">4000</div></div>
<div class="hc" style="left:1px;top:230.5px;width:36px;height:12.75px"><div class="cell" style="right:0;top:0">4496</div></div>
<div class="hc" style="left:1px;top:243.25px;width:36px;height:12.75px"><div class="cell" style="right:0;top:0">5000</div></div>
<div class="hc" style="left:1px;top:256.0px;width:36px;height:12.75px"><div class="cell" style="right:0;top:0">6000</div></div>
<div class="hc" style="left:1px;top:268.75px;width:36px;height:12.75px"><div class="cell" style="right:0;top:0">7000</div></div>
<div class="hc" style="left:1px;top:281.5px;width:36px;height:12.75px"><div class="cell" style="right:0;top:0">7936</div></div>
<div class="hc" style="left:37px;top:1.0px;width:37px;height:12.75px"><div class="t" style="left:2px;top:2px">1</div></div>
<div class="hc" style="left:37px;top:13.75px;width:37px;height:12.75px"><div class="cell" style="right:0;top:1px">114</div></div>
<div class="hc" style="left:37px;top:26.5px;width:37px;height:12.75px"><div class="cell" style="right:0;top:1px">26.48"</div></div>
<div class="dc" style="left:37px;top:39.25px;width:37px;height:12.75px;background:#f800f8"><div class="cell" style="right:0;top:0;color:#000">15</div></div>
<div class="dc" style="left:37px;top:52.0px;width:37px;height:12.75px;background:#03fff6"><div class="cell" style="right:0;top:0;color:#000">17</div></div>
<div class="dc" style="left:37px;top:64.75px;width:37px;height:12.75px;background:#04fff5"><div class="cell" style="right:0;top:0;color:#000">18</div></div>
<div class="dc" style="left:37px;top:77.5px;width:37px;height:12.75px;background:#04fff5"><div class="cell" style="right:0;top:0;color:#000">19</div></div>
<div class="dc" style="left:37px;top:90.25px;width:37px;height:12.75px;background:#04fff5"><div class="cell" style="right:0;top:0;color:#000">21</div></div>
<div class="dc" style="left:37px;top:103.0px;width:37px;height:12.75px;background:#05fff4"><div class="cell" style="right:0;top:0;color:#000">24</div></div>
<div class="dc" style="left:37px;top:115.75px;width:37px;height:12.75px;background:#06fff3"><div class="cell" style="right:0;top:0;color:#000">28</div></div>
<div class="dc" style="left:37px;top:128.5px;width:37px;height:12.75px;background:#06fff3"><div class="cell" style="right:0;top:0;color:#000">27</div></div>
<div class="dc" style="left:37px;top:141.25px;width:37px;height:12.75px;background:#06fff3"><div class="cell" style="right:0;top:0;color:#000">27</div></div>
<div class="dc" style="left:37px;top:154.0px;width:37px;height:12.75px;background:#06fff3"><div class="cell" style="right:0;top:0;color:#000">27</div></div>
<div class="dc" style="left:37px;top:166.75px;width:37px;height:12.75px;background:#06fff3"><div class="cell" style="right:0;top:0;color:#000">28</div></div>
<div class="dc" style="left:37px;top:179.5px;width:37px;height:12.75px;background:#07fff2"><div class="cell" style="right:0;top:0;color:#000">31</div></div>
<div class="dc" style="left:37px;top:192.25px;width:37px;height:12.75px;background:#07fff2"><div class="cell" style="right:0;top:0;color:#000">31</div></div>
<div class="dc" style="left:37px;top:205.0px;width:37px;height:12.75px;background:#07fff2"><div class="cell" style="right:0;top:0;color:#000">31</div></div>
<div class="dc" style="left:37px;top:217.75px;width:37px;height:12.75px;background:#07fff2"><div class="cell" style="right:0;top:0;color:#000">32</div></div>
<div class="dc" style="left:37px;top:230.5px;width:37px;height:12.75px;background:#08fff1"><div class="cell" style="right:0;top:0;color:#000">35</div></div>
<div class="dc" style="left:37px;top:243.25px;width:37px;height:12.75px;background:#08fff1"><div class="cell" style="right:0;top:0;color:#000">38</div></div>
<div class="dc" style="left:37px;top:256.0px;width:37px;height:12.75px;background:#09fff0"><div class="cell" style="right:0;top:0;color:#000">41</div></div>
<div class="dc" style="left:37px;top:268.75px;width:37px;height:12.75px;background:#09fff0"><div class="cell" style="right:0;top:0;color:#000">42</div></div>
<div class="dc" style="left:37px;top:281.5px;width:37px;height:12.75px;background:#09fff0"><div class="cell" style="right:0;top:0;color:#000">42</div></div>
<div class="hc" style="left:74px;top:1.0px;width:37px;height:12.75px"><div class="t" style="left:2px;top:2px">2</div></div>
<div class="hc" style="left:74px;top:13.75px;width:37px;height:12.75px"><div class="cell" style="right:0;top:1px">288</div></div>
<div class="hc" style="left:74px;top:26.5px;width:37px;height:12.75px"><div class="cell" style="right:0;top:1px">21.35"</div></div>
<div class="dc" style="left:74px;top:39.25px;width:37px;height:12.75px;background:#1bffde"><div class="cell" style="right:0;top:0;color:#000">118</div></div>
<div class="dc" style="left:74px;top:52.0px;width:37px;height:12.75px;background:#1dffdc"><div class="cell" style="right:0;top:0;color:#000">127</div></div>
<div class="dc" style="left:74px;top:64.75px;width:37px;height:12.75px;background:#1fffda"><div class="cell" style="right:0;top:0;color:#000">134</div></div>
<div class="dc" style="left:74px;top:77.5px;width:37px;height:12.75px;background:#1fffda"><div class="cell" style="right:0;top:0;color:#000">135</div></div>
<div class="dc" style="left:74px;top:90.25px;width:37px;height:12.75px;background:#20ffd9"><div class="cell" style="right:0;top:0;color:#000">138</div></div>
<div class="dc" style="left:74px;top:103.0px;width:37px;height:12.75px;background:#20ffd9"><div class="cell" style="right:0;top:0;color:#000">140</div></div>
<div class="dc" style="left:74px;top:115.75px;width:37px;height:12.75px;background:#22ffd7"><div class="cell" style="right:0;top:0;color:#000">148</div></div>
<div class="dc" style="left:74px;top:128.5px;width:37px;height:12.75px;background:#22ffd7"><div class="cell" style="right:0;top:0;color:#000">146</div></div>
<div class="dc" style="left:74px;top:141.25px;width:37px;height:12.75px;background:#22ffd7"><div class="cell" style="right:0;top:0;color:#000">148</div></div>
<div class="dc" style="left:74px;top:154.0px;width:37px;height:12.75px;background:#22ffd7"><div class="cell" style="right:0;top:0;color:#000">148</div></div>
<div class="dc" style="left:74px;top:166.75px;width:37px;height:12.75px;background:#22ffd7"><div class="cell" style="right:0;top:0;color:#000">148</div></div>
<div class="dc" style="left:74px;top:179.5px;width:37px;height:12.75px;background:#25ffd4"><div class="cell" style="right:0;top:0;color:#000">159</div></div>
<div class="dc" style="left:74px;top:192.25px;width:37px;height:12.75px;background:#25ffd4"><div class="cell" style="right:0;top:0;color:#000">159</div></div>
<div class="dc" style="left:74px;top:205.0px;width:37px;height:12.75px;background:#24ffd5"><div class="cell" style="right:0;top:0;color:#000">155</div></div>
<div class="dc" style="left:74px;top:217.75px;width:37px;height:12.75px;background:#25ffd4"><div class="cell" style="right:0;top:0;color:#000">161</div></div>
<div class="dc" style="left:74px;top:230.5px;width:37px;height:12.75px;background:#27ffd2"><div class="cell" style="right:0;top:0;color:#000">166</div></div>
<div class="dc" style="left:74px;top:243.25px;width:37px;height:12.75px;background:#29ffd0"><div class="cell" style="right:0;top:0;color:#000">178</div></div>
<div class="dc" style="left:74px;top:256.0px;width:37px;height:12.75px;background:#2dffcc"><div class="cell" style="right:0;top:0;color:#000">192</div></div>
<div class="dc" style="left:74px;top:268.75px;width:37px;height:12.75px;background:#2dffcc"><div class="cell" style="right:0;top:0;color:#000">195</div></div>
<div class="dc" style="left:74px;top:281.5px;width:37px;height:12.75px;background:#2dffcc"><div class="cell" style="right:0;top:0;color:#000">195</div></div>
<div class="hc" style="left:111px;top:1.0px;width:37px;height:12.75px"><div class="t" style="left:2px;top:2px">3</div></div>
<div class="hc" style="left:111px;top:13.75px;width:37px;height:12.75px"><div class="cell" style="right:0;top:1px">403</div></div>
<div class="hc" style="left:111px;top:26.5px;width:37px;height:12.75px"><div class="cell" style="right:0;top:1px">17.96"</div></div>
<div class="dc" style="left:111px;top:39.25px;width:37px;height:12.75px;background:#2dffcc"><div class="cell" style="right:0;top:0;color:#000">195</div></div>
<div class="dc" style="left:111px;top:52.0px;width:37px;height:12.75px;background:#31ffc8"><div class="cell" style="right:0;top:0;color:#000">210</div></div>
<div class="dc" style="left:111px;top:64.75px;width:37px;height:12.75px;background:#32ffc7"><div class="cell" style="right:0;top:0;color:#000">215</div></div>
<div class="dc" style="left:111px;top:77.5px;width:37px;height:12.75px;background:#32ffc7"><div class="cell" style="right:0;top:0;color:#000">215</div></div>
<div class="dc" style="left:111px;top:90.25px;width:37px;height:12.75px;background:#33ffc6"><div class="cell" style="right:0;top:0;color:#000">220</div></div>
<div class="dc" style="left:111px;top:103.0px;width:37px;height:12.75px;background:#33ffc6"><div class="cell" style="right:0;top:0;color:#000">220</div></div>
<div class="dc" style="left:111px;top:115.75px;width:37px;height:12.75px;background:#34ffc5"><div class="cell" style="right:0;top:0;color:#000">225</div></div>
<div class="dc" style="left:111px;top:128.5px;width:37px;height:12.75px;background:#32ffc7"><div class="cell" style="right:0;top:0;color:#000">213</div></div>
<div class="dc" style="left:111px;top:141.25px;width:37px;height:12.75px;background:#32ffc7"><div class="cell" style="right:0;top:0;color:#000">213</div></div>
<div class="dc" style="left:111px;top:154.0px;width:37px;height:12.75px;background:#32ffc7"><div class="cell" style="right:0;top:0;color:#000">213</div></div>
<div class="dc" style="left:111px;top:166.75px;width:37px;height:12.75px;background:#32ffc7"><div class="cell" style="right:0;top:0;color:#000">213</div></div>
<div class="dc" style="left:111px;top:179.5px;width:37px;height:12.75px;background:#36ffc3"><div class="cell" style="right:0;top:0;color:#000">230</div></div>
<div class="dc" style="left:111px;top:192.25px;width:37px;height:12.75px;background:#36ffc3"><div class="cell" style="right:0;top:0;color:#000">230</div></div>
<div class="dc" style="left:111px;top:205.0px;width:37px;height:12.75px;background:#35ffc4"><div class="cell" style="right:0;top:0;color:#000">228</div></div>
<div class="dc" style="left:111px;top:217.75px;width:37px;height:12.75px;background:#37ffc2"><div class="cell" style="right:0;top:0;color:#000">238</div></div>
<div class="dc" style="left:111px;top:230.5px;width:37px;height:12.75px;background:#38ffc1"><div class="cell" style="right:0;top:0;color:#000">241</div></div>
<div class="dc" style="left:111px;top:243.25px;width:37px;height:12.75px;background:#3cffbd"><div class="cell" style="right:0;top:0;color:#000">258</div></div>
<div class="dc" style="left:111px;top:256.0px;width:37px;height:12.75px;background:#3fffba"><div class="cell" style="right:0;top:0;color:#000">269</div></div>
<div class="dc" style="left:111px;top:268.75px;width:37px;height:12.75px;background:#3fffba"><div class="cell" style="right:0;top:0;color:#000">271</div></div>
<div class="dc" style="left:111px;top:281.5px;width:37px;height:12.75px;background:#3fffba"><div class="cell" style="right:0;top:0;color:#000">271</div></div>
<div class="hc" style="left:148px;top:1.0px;width:37px;height:12.75px"><div class="t" style="left:2px;top:2px">4</div></div>
<div class="hc" style="left:148px;top:13.75px;width:37px;height:12.75px"><div class="cell" style="right:0;top:1px">519</div></div>
<div class="hc" style="left:148px;top:26.5px;width:37px;height:12.75px"><div class="cell" style="right:0;top:1px">14.55"</div></div>
<div class="dc" style="left:148px;top:39.25px;width:37px;height:12.75px;background:#3affbf"><div class="cell" style="right:0;top:0;color:#000">248</div></div>
<div class="dc" style="left:148px;top:52.0px;width:37px;height:12.75px;background:#3affbf"><div class="cell" style="right:0;top:0;color:#000">248</div></div>
<div class="dc" style="left:148px;top:64.75px;width:37px;height:12.75px;background:#3cffbd"><div class="cell" style="right:0;top:0;color:#000">257</div></div>
<div class="dc" style="left:148px;top:77.5px;width:37px;height:12.75px;background:#3cffbd"><div class="cell" style="right:0;top:0;color:#000">257</div></div>
<div class="dc" style="left:148px;top:90.25px;width:37px;height:12.75px;background:#40ffb9"><div class="cell" style="right:0;top:0;color:#000">273</div></div>
<div class="dc" style="left:148px;top:103.0px;width:37px;height:12.75px;background:#43ffb6"><div class="cell" style="right:0;top:0;color:#000">288</div></div>
<div class="dc" style="left:148px;top:115.75px;width:37px;height:12.75px;background:#44ffb5"><div class="cell" style="right:0;top:0;color:#000">293</div></div>
<div class="dc" style="left:148px;top:128.5px;width:37px;height:12.75px;background:#42ffb7"><div class="cell" style="right:0;top:0;color:#000">282</div></div>
<div class="dc" style="left:148px;top:141.25px;width:37px;height:12.75px;background:#3fffba"><div class="cell" style="right:0;top:0;color:#000">270</div></div>
<div class="dc" style="left:148px;top:154.0px;width:37px;height:12.75px;background:#3fffba"><div class="cell" style="right:0;top:0;color:#000">270</div></div>
<div class="dc" style="left:148px;top:166.75px;width:37px;height:12.75px;background:#3fffba"><div class="cell" style="right:0;top:0;color:#000">270</div></div>
<div class="dc" style="left:148px;top:179.5px;width:37px;height:12.75px;background:#44ffb5"><div class="cell" style="right:0;top:0;color:#000">291</div></div>
<div class="dc" style="left:148px;top:192.25px;width:37px;height:12.75px;background:#43ffb6"><div class="cell" style="right:0;top:0;color:#000">288</div></div>
<div class="dc" style="left:148px;top:205.0px;width:37px;height:12.75px;background:#41ffb8"><div class="cell" style="right:0;top:0;color:#000">279</div></div>
<div class="dc" style="left:148px;top:217.75px;width:37px;height:12.75px;background:#42ffb7"><div class="cell" style="right:0;top:0;color:#000">284</div></div>
<div class="dc" style="left:148px;top:230.5px;width:37px;height:12.75px;background:#45ffb4"><div class="cell" style="right:0;top:0;color:#000">296</div></div>
<div class="dc" style="left:148px;top:243.25px;width:37px;height:12.75px;background:#4affaf"><div class="cell" style="right:0;top:0;color:#000">317</div></div>
<div class="dc" style="left:148px;top:256.0px;width:37px;height:12.75px;background:#4effab"><div class="cell" style="right:0;top:0;color:#000">332</div></div>
<div class="dc" style="left:148px;top:268.75px;width:37px;height:12.75px;background:#4effab"><div class="cell" style="right:0;top:0;color:#000">332</div></div>
<div class="dc" style="left:148px;top:281.5px;width:37px;height:12.75px;background:#4effab"><div class="cell" style="right:0;top:0;color:#000">332</div></div>
<div class="hc" style="left:185px;top:1.0px;width:36px;height:12.75px"><div class="t" style="left:2px;top:2px">5</div></div>
<div class="hc" style="left:185px;top:13.75px;width:36px;height:12.75px"><div class="cell" style="right:0;top:1px">634</div></div>
<div class="hc" style="left:185px;top:26.5px;width:36px;height:12.75px"><div class="cell" style="right:0;top:1px">11.16"</div></div>
<div class="dc" style="left:185px;top:39.25px;width:36px;height:12.75px;background:#49ffb0"><div class="cell" style="right:0;top:0;color:#000">312</div></div>
<div class="dc" style="left:185px;top:52.0px;width:36px;height:12.75px;background:#49ffb0"><div class="cell" style="right:0;top:0;color:#000">312</div></div>
<div class="dc" style="left:185px;top:64.75px;width:36px;height:12.75px;background:#4affaf"><div class="cell" style="right:0;top:0;color:#000">317</div></div>
<div class="dc" style="left:185px;top:77.5px;width:36px;height:12.75px;background:#4affaf"><div class="cell" style="right:0;top:0;color:#000">317</div></div>
<div class="dc" style="left:185px;top:90.25px;width:36px;height:12.75px;background:#4cffad"><div class="cell" style="right:0;top:0;color:#000">326</div></div>
<div class="dc" style="left:185px;top:103.0px;width:36px;height:12.75px;background:#4effab"><div class="cell" style="right:0;top:0;color:#000">334</div></div>
<div class="dc" style="left:185px;top:115.75px;width:36px;height:12.75px;background:#4effab"><div class="cell" style="right:0;top:0;color:#000">333</div></div>
<div class="dc" style="left:185px;top:128.5px;width:36px;height:12.75px;background:#4effab"><div class="cell" style="right:0;top:0;color:#000">333</div></div>
<div class="dc" style="left:185px;top:141.25px;width:36px;height:12.75px;background:#4cffad"><div class="cell" style="right:0;top:0;color:#000">327</div></div>
<div class="dc" style="left:185px;top:154.0px;width:36px;height:12.75px;background:#4cffad"><div class="cell" style="right:0;top:0;color:#000">326</div></div>
<div class="dc" style="left:185px;top:166.75px;width:36px;height:12.75px;background:#4cffad"><div class="cell" style="right:0;top:0;color:#000">327</div></div>
<div class="dc" style="left:185px;top:179.5px;width:36px;height:12.75px;background:#50ffa9"><div class="cell" style="right:0;top:0;color:#000">343</div></div>
<div class="dc" style="left:185px;top:192.25px;width:36px;height:12.75px;background:#4fffaa"><div class="cell" style="right:0;top:0;color:#000">340</div></div>
<div class="dc" style="left:185px;top:205.0px;width:36px;height:12.75px;background:#4effab"><div class="cell" style="right:0;top:0;color:#000">333</div></div>
<div class="dc" style="left:185px;top:217.75px;width:36px;height:12.75px;background:#4effab"><div class="cell" style="right:0;top:0;color:#000">336</div></div>
<div class="dc" style="left:185px;top:230.5px;width:36px;height:12.75px;background:#50ffa9"><div class="cell" style="right:0;top:0;color:#000">343</div></div>
<div class="dc" style="left:185px;top:243.25px;width:36px;height:12.75px;background:#53ffa6"><div class="cell" style="right:0;top:0;color:#000">354</div></div>
<div class="dc" style="left:185px;top:256.0px;width:36px;height:12.75px;background:#5bff9e"><div class="cell" style="right:0;top:0;color:#000">390</div></div>
<div class="dc" style="left:185px;top:268.75px;width:36px;height:12.75px;background:#5eff9b"><div class="cell" style="right:0;top:0;color:#000">403</div></div>
<div class="dc" style="left:185px;top:281.5px;width:36px;height:12.75px;background:#5eff9b"><div class="cell" style="right:0;top:0;color:#000">404</div></div>
<div class="hc" style="left:221px;top:1.0px;width:37px;height:12.75px"><div class="t" style="left:2px;top:2px">6</div></div>
<div class="hc" style="left:221px;top:13.75px;width:37px;height:12.75px"><div class="cell" style="right:0;top:1px">750</div></div>
<div class="hc" style="left:221px;top:26.5px;width:37px;height:12.75px"><div class="cell" style="right:0;top:1px">7.75"</div></div>
<div class="dc" style="left:221px;top:39.25px;width:37px;height:12.75px;background:#5eff9b"><div class="cell" style="right:0;top:0;color:#000">401</div></div>
<div class="dc" style="left:221px;top:52.0px;width:37px;height:12.75px;background:#5eff9b"><div class="cell" style="right:0;top:0;color:#000">401</div></div>
<div class="dc" style="left:221px;top:64.75px;width:37px;height:12.75px;background:#5eff9b"><div class="cell" style="right:0;top:0;color:#000">401</div></div>
<div class="dc" style="left:221px;top:77.5px;width:37px;height:12.75px;background:#5eff9b"><div class="cell" style="right:0;top:0;color:#000">401</div></div>
<div class="dc" style="left:221px;top:90.25px;width:37px;height:12.75px;background:#5fff9a"><div class="cell" style="right:0;top:0;color:#000">405</div></div>
<div class="dc" style="left:221px;top:103.0px;width:37px;height:12.75px;background:#60ff99"><div class="cell" style="right:0;top:0;color:#000">410</div></div>
<div class="dc" style="left:221px;top:115.75px;width:37px;height:12.75px;background:#62ff97"><div class="cell" style="right:0;top:0;color:#000">419</div></div>
<div class="dc" style="left:221px;top:128.5px;width:37px;height:12.75px;background:#67ff92"><div class="cell" style="right:0;top:0;color:#000">439</div></div>
<div class="dc" style="left:221px;top:141.25px;width:37px;height:12.75px;background:#69ff90"><div class="cell" style="right:0;top:0;color:#000">450</div></div>
<div class="dc" style="left:221px;top:154.0px;width:37px;height:12.75px;background:#6aff8f"><div class="cell" style="right:0;top:0;color:#000">452</div></div>
<div class="dc" style="left:221px;top:166.75px;width:37px;height:12.75px;background:#6bff8e"><div class="cell" style="right:0;top:0;color:#000">457</div></div>
<div class="dc" style="left:221px;top:179.5px;width:37px;height:12.75px;background:#6dff8c"><div class="cell" style="right:0;top:0;color:#000">468</div></div>
<div class="dc" style="left:221px;top:192.25px;width:37px;height:12.75px;background:#6fff8a"><div class="cell" style="right:0;top:0;color:#000">473</div></div>
<div class="dc" style="left:221px;top:205.0px;width:37px;height:12.75px;background:#70ff89"><div class="cell" style="right:0;top:0;color:#000">477</div></div>
<div class="dc" style="left:221px;top:217.75px;width:37px;height:12.75px;background:#70ff89"><div class="cell" style="right:0;top:0;color:#000">479</div></div>
<div class="dc" style="left:221px;top:230.5px;width:37px;height:12.75px;background:#70ff89"><div class="cell" style="right:0;top:0;color:#000">479</div></div>
<div class="dc" style="left:221px;top:243.25px;width:37px;height:12.75px;background:#73ff86"><div class="cell" style="right:0;top:0;color:#000">491</div></div>
<div class="dc" style="left:221px;top:256.0px;width:37px;height:12.75px;background:#78ff81"><div class="cell" style="right:0;top:0;color:#000">513</div></div>
<div class="dc" style="left:221px;top:268.75px;width:37px;height:12.75px;background:#7bff7e"><div class="cell" style="right:0;top:0;color:#000">527</div></div>
<div class="dc" style="left:221px;top:281.5px;width:37px;height:12.75px;background:#7cff7d"><div class="cell" style="right:0;top:0;color:#000">529</div></div>
<div class="hc" style="left:258px;top:1.0px;width:37px;height:12.75px"><div class="t" style="left:2px;top:2px">7</div></div>
<div class="hc" style="left:258px;top:13.75px;width:37px;height:12.75px"><div class="cell" style="right:0;top:1px">865</div></div>
<div class="hc" style="left:258px;top:26.5px;width:37px;height:12.75px"><div class="cell" style="right:0;top:1px">4.36"</div></div>
<div class="dc" style="left:258px;top:39.25px;width:37px;height:12.75px;background:#71ff88"><div class="cell" style="right:0;top:0;color:#000">485</div></div>
<div class="dc" style="left:258px;top:52.0px;width:37px;height:12.75px;background:#71ff88"><div class="cell" style="right:0;top:0;color:#000">485</div></div>
<div class="dc" style="left:258px;top:64.75px;width:37px;height:12.75px;background:#73ff86"><div class="cell" style="right:0;top:0;color:#000">490</div></div>
<div class="dc" style="left:258px;top:77.5px;width:37px;height:12.75px;background:#73ff86"><div class="cell" style="right:0;top:0;color:#000">490</div></div>
<div class="dc" style="left:258px;top:90.25px;width:37px;height:12.75px;background:#74ff85"><div class="cell" style="right:0;top:0;color:#000">495</div></div>
<div class="dc" style="left:258px;top:103.0px;width:37px;height:12.75px;background:#77ff82"><div class="cell" style="right:0;top:0;color:#000">508</div></div>
<div class="dc" style="left:258px;top:115.75px;width:37px;height:12.75px;background:#79ff80"><div class="cell" style="right:0;top:0;color:#000">518</div></div>
<div class="dc" style="left:258px;top:128.5px;width:37px;height:12.75px;background:#7aff7f"><div class="cell" style="right:0;top:0;color:#000">520</div></div>
<div class="dc" style="left:258px;top:141.25px;width:37px;height:12.75px;background:#7eff7b"><div class="cell" style="right:0;top:0;color:#000">540</div></div>
<div class="dc" style="left:258px;top:154.0px;width:37px;height:12.75px;background:#82ff77"><div class="cell" style="right:0;top:0;color:#000">555</div></div>
<div class="dc" style="left:258px;top:166.75px;width:37px;height:12.75px;background:#85ff74"><div class="cell" style="right:0;top:0;color:#000">568</div></div>
<div class="dc" style="left:258px;top:179.5px;width:37px;height:12.75px;background:#89ff70"><div class="cell" style="right:0;top:0;color:#000">583</div></div>
<div class="dc" style="left:258px;top:192.25px;width:37px;height:12.75px;background:#89ff70"><div class="cell" style="right:0;top:0;color:#000">585</div></div>
<div class="dc" style="left:258px;top:205.0px;width:37px;height:12.75px;background:#8bff6e"><div class="cell" style="right:0;top:0;color:#000">593</div></div>
<div class="dc" style="left:258px;top:217.75px;width:37px;height:12.75px;background:#8dff6c"><div class="cell" style="right:0;top:0;color:#000">603</div></div>
<div class="dc" style="left:258px;top:230.5px;width:37px;height:12.75px;background:#8dff6c"><div class="cell" style="right:0;top:0;color:#000">603</div></div>
<div class="dc" style="left:258px;top:243.25px;width:37px;height:12.75px;background:#90ff69"><div class="cell" style="right:0;top:0;color:#000">615</div></div>
<div class="dc" style="left:258px;top:256.0px;width:37px;height:12.75px;background:#94ff65"><div class="cell" style="right:0;top:0;color:#000">630</div></div>
<div class="dc" style="left:258px;top:268.75px;width:37px;height:12.75px;background:#91ff68"><div class="cell" style="right:0;top:0;color:#000">620</div></div>
<div class="dc" style="left:258px;top:281.5px;width:37px;height:12.75px;background:#91ff68"><div class="cell" style="right:0;top:0;color:#000">620</div></div>
<div class="hc" style="left:295px;top:1.0px;width:36px;height:12.75px"><div class="t" style="left:2px;top:2px">8</div></div>
<div class="hc" style="left:295px;top:13.75px;width:36px;height:12.75px"><div class="cell" style="right:0;top:1px">923</div></div>
<div class="hc" style="left:295px;top:26.5px;width:36px;height:12.75px"><div class="cell" style="right:0;top:1px">2.65"</div></div>
<div class="dc" style="left:295px;top:39.25px;width:36px;height:12.75px;background:#7aff7f"><div class="cell" style="right:0;top:0;color:#000">523</div></div>
<div class="dc" style="left:295px;top:52.0px;width:36px;height:12.75px;background:#7aff7f"><div class="cell" style="right:0;top:0;color:#000">523</div></div>
<div class="dc" style="left:295px;top:64.75px;width:36px;height:12.75px;background:#7bff7e"><div class="cell" style="right:0;top:0;color:#000">525</div></div>
<div class="dc" style="left:295px;top:77.5px;width:36px;height:12.75px;background:#7cff7d"><div class="cell" style="right:0;top:0;color:#000">528</div></div>
<div class="dc" style="left:295px;top:90.25px;width:36px;height:12.75px;background:#7dff7c"><div class="cell" style="right:0;top:0;color:#000">534</div></div>
<div class="dc" style="left:295px;top:103.0px;width:36px;height:12.75px;background:#7fff7a"><div class="cell" style="right:0;top:0;color:#000">542</div></div>
<div class="dc" style="left:295px;top:115.75px;width:36px;height:12.75px;background:#83ff76"><div class="cell" style="right:0;top:0;color:#000">561</div></div>
<div class="dc" style="left:295px;top:128.5px;width:36px;height:12.75px;background:#0a246a"><div class="cell" style="right:0;top:0;color:#fff">583</div></div>
<div class="dc" style="left:295px;top:141.25px;width:36px;height:12.75px;background:#8bff6e"><div class="cell" style="right:0;top:0;color:#000">594</div></div>
<div class="dc" style="left:295px;top:154.0px;width:36px;height:12.75px;background:#8eff6b"><div class="cell" style="right:0;top:0;color:#000">605</div></div>
<div class="dc" style="left:295px;top:166.75px;width:36px;height:12.75px;background:#91ff68"><div class="cell" style="right:0;top:0;color:#000">619</div></div>
<div class="dc" style="left:295px;top:179.5px;width:36px;height:12.75px;background:#96ff63"><div class="cell" style="right:0;top:0;color:#000">641</div></div>
<div class="dc" style="left:295px;top:192.25px;width:36px;height:12.75px;background:#97ff62"><div class="cell" style="right:0;top:0;color:#000">646</div></div>
<div class="dc" style="left:295px;top:205.0px;width:36px;height:12.75px;background:#98ff61"><div class="cell" style="right:0;top:0;color:#000">649</div></div>
<div class="dc" style="left:295px;top:217.75px;width:36px;height:12.75px;background:#97ff62"><div class="cell" style="right:0;top:0;color:#000">646</div></div>
<div class="dc" style="left:295px;top:230.5px;width:36px;height:12.75px;background:#99ff60"><div class="cell" style="right:0;top:0;color:#000">655</div></div>
<div class="dc" style="left:295px;top:243.25px;width:36px;height:12.75px;background:#9cff5d"><div class="cell" style="right:0;top:0;color:#000">668</div></div>
<div class="dc" style="left:295px;top:256.0px;width:36px;height:12.75px;background:#9eff5b"><div class="cell" style="right:0;top:0;color:#000">674</div></div>
<div class="dc" style="left:295px;top:268.75px;width:36px;height:12.75px;background:#9cff5d"><div class="cell" style="right:0;top:0;color:#000">666</div></div>
<div class="dc" style="left:295px;top:281.5px;width:36px;height:12.75px;background:#9fff5a"><div class="cell" style="right:0;top:0;color:#000">677</div></div>
<div class="hc" style="left:331px;top:1.0px;width:37px;height:12.75px"><div class="t" style="left:2px;top:2px">9</div></div>
<div class="hc" style="left:331px;top:13.75px;width:37px;height:12.75px"><div class="cell" style="right:0;top:1px">981</div></div>
<div class="hc" style="left:331px;top:26.5px;width:37px;height:12.75px"><div class="cell" style="right:0;top:1px">0.94"</div></div>
<div class="dc" style="left:331px;top:39.25px;width:37px;height:12.75px;background:#8bff6e"><div class="cell" style="right:0;top:0;color:#000">592</div></div>
<div class="dc" style="left:331px;top:52.0px;width:37px;height:12.75px;background:#8bff6e"><div class="cell" style="right:0;top:0;color:#000">592</div></div>
<div class="dc" style="left:331px;top:64.75px;width:37px;height:12.75px;background:#8dff6c"><div class="cell" style="right:0;top:0;color:#000">601</div></div>
<div class="dc" style="left:331px;top:77.5px;width:37px;height:12.75px;background:#8eff6b"><div class="cell" style="right:0;top:0;color:#000">608</div></div>
<div class="dc" style="left:331px;top:90.25px;width:37px;height:12.75px;background:#91ff68"><div class="cell" style="right:0;top:0;color:#000">621</div></div>
<div class="dc" style="left:331px;top:103.0px;width:37px;height:12.75px;background:#97ff62"><div class="cell" style="right:0;top:0;color:#000">644</div></div>
<div class="dc" style="left:331px;top:115.75px;width:37px;height:12.75px;background:#9bff5e"><div class="cell" style="right:0;top:0;color:#000">660</div></div>
<div class="dc" style="left:331px;top:128.5px;width:37px;height:12.75px;background:#9dff5c"><div class="cell" style="right:0;top:0;color:#000">670</div></div>
<div class="dc" style="left:331px;top:141.25px;width:37px;height:12.75px;background:#9eff5b"><div class="cell" style="right:0;top:0;color:#000">676</div></div>
<div class="dc" style="left:331px;top:154.0px;width:37px;height:12.75px;background:#a1ff58"><div class="cell" style="right:0;top:0;color:#000">686</div></div>
<div class="dc" style="left:331px;top:166.75px;width:37px;height:12.75px;background:#a4ff55"><div class="cell" style="right:0;top:0;color:#000">702</div></div>
<div class="dc" style="left:331px;top:179.5px;width:37px;height:12.75px;background:#b1ff48"><div class="cell" style="right:0;top:0;color:#000">757</div></div>
<div class="dc" style="left:331px;top:192.25px;width:37px;height:12.75px;background:#b3ff46"><div class="cell" style="right:0;top:0;color:#000">764</div></div>
<div class="dc" style="left:331px;top:205.0px;width:37px;height:12.75px;background:#b4ff45"><div class="cell" style="right:0;top:0;color:#000">767</div></div>
<div class="dc" style="left:331px;top:217.75px;width:37px;height:12.75px;background:#b4ff45"><div class="cell" style="right:0;top:0;color:#000">767</div></div>
<div class="dc" style="left:331px;top:230.5px;width:37px;height:12.75px;background:#b3ff46"><div class="cell" style="right:0;top:0;color:#000">764</div></div>
<div class="dc" style="left:331px;top:243.25px;width:37px;height:12.75px;background:#b4ff45"><div class="cell" style="right:0;top:0;color:#000">767</div></div>
<div class="dc" style="left:331px;top:256.0px;width:37px;height:12.75px;background:#b1ff48"><div class="cell" style="right:0;top:0;color:#000">757</div></div>
<div class="dc" style="left:331px;top:268.75px;width:37px;height:12.75px;background:#b3ff46"><div class="cell" style="right:0;top:0;color:#000">764</div></div>
<div class="dc" style="left:331px;top:281.5px;width:37px;height:12.75px;background:#b3ff46"><div class="cell" style="right:0;top:0;color:#000">764</div></div>
<div class="hc" style="left:368px;top:1.0px;width:37px;height:12.75px"><div class="t" style="left:2px;top:2px">B10</div></div>
<div class="hc" style="left:368px;top:13.75px;width:37px;height:12.75px"><div class="cell" style="right:0;top:1px">1039</div></div>
<div class="hc" style="left:368px;top:26.5px;width:37px;height:12.75px"><div class="cell" style="right:0;top:1px">0.4</div></div>
<div class="dc" style="left:368px;top:39.25px;width:37px;height:12.75px;background:#a0ff59"><div class="cell" style="right:0;top:0;color:#000">683</div></div>
<div class="dc" style="left:368px;top:52.0px;width:37px;height:12.75px;background:#a0ff59"><div class="cell" style="right:0;top:0;color:#000">683</div></div>
<div class="dc" style="left:368px;top:64.75px;width:37px;height:12.75px;background:#a0ff59"><div class="cell" style="right:0;top:0;color:#000">683</div></div>
<div class="dc" style="left:368px;top:77.5px;width:37px;height:12.75px;background:#a0ff59"><div class="cell" style="right:0;top:0;color:#000">683</div></div>
<div class="dc" style="left:368px;top:90.25px;width:37px;height:12.75px;background:#a4ff55"><div class="cell" style="right:0;top:0;color:#000">700</div></div>
<div class="dc" style="left:368px;top:103.0px;width:37px;height:12.75px;background:#a7ff52"><div class="cell" style="right:0;top:0;color:#000">711</div></div>
<div class="dc" style="left:368px;top:115.75px;width:37px;height:12.75px;background:#abff4e"><div class="cell" style="right:0;top:0;color:#000">728</div></div>
<div class="dc" style="left:368px;top:128.5px;width:37px;height:12.75px;background:#acff4d"><div class="cell" style="right:0;top:0;color:#000">735</div></div>
<div class="dc" style="left:368px;top:141.25px;width:37px;height:12.75px;background:#aeff4b"><div class="cell" style="right:0;top:0;color:#000">742</div></div>
<div class="dc" style="left:368px;top:154.0px;width:37px;height:12.75px;background:#b0ff49"><div class="cell" style="right:0;top:0;color:#000">749</div></div>
<div class="dc" style="left:368px;top:166.75px;width:37px;height:12.75px;background:#b4ff45"><div class="cell" style="right:0;top:0;color:#000">770</div></div>
<div class="dc" style="left:368px;top:179.5px;width:37px;height:12.75px;background:#beff3b"><div class="cell" style="right:0;top:0;color:#000">809</div></div>
<div class="dc" style="left:368px;top:192.25px;width:37px;height:12.75px;background:#bfff3a"><div class="cell" style="right:0;top:0;color:#000">816</div></div>
<div class="dc" style="left:368px;top:205.0px;width:37px;height:12.75px;background:#c0ff39"><div class="cell" style="right:0;top:0;color:#000">819</div></div>
<div class="dc" style="left:368px;top:217.75px;width:37px;height:12.75px;background:#c0ff39"><div class="cell" style="right:0;top:0;color:#000">819</div></div>
<div class="dc" style="left:368px;top:230.5px;width:37px;height:12.75px;background:#c3ff36"><div class="cell" style="right:0;top:0;color:#000">830</div></div>
<div class="dc" style="left:368px;top:243.25px;width:37px;height:12.75px;background:#c4ff35"><div class="cell" style="right:0;top:0;color:#000">837</div></div>
<div class="dc" style="left:368px;top:256.0px;width:37px;height:12.75px;background:#c3ff36"><div class="cell" style="right:0;top:0;color:#000">833</div></div>
<div class="dc" style="left:368px;top:268.75px;width:37px;height:12.75px;background:#c3ff36"><div class="cell" style="right:0;top:0;color:#000">833</div></div>
<div class="dc" style="left:368px;top:281.5px;width:37px;height:12.75px;background:#c3ff36"><div class="cell" style="right:0;top:0;color:#000">833</div></div>
<div class="hc" style="left:405px;top:1.0px;width:37px;height:12.75px"><div class="t" style="left:2px;top:2px">B11</div></div>
<div class="hc" style="left:405px;top:13.75px;width:37px;height:12.75px"><div class="cell" style="right:0;top:1px">1161</div></div>
<div class="hc" style="left:405px;top:26.5px;width:37px;height:12.75px"><div class="cell" style="right:0;top:1px">2.1</div></div>
<div class="dc" style="left:405px;top:39.25px;width:37px;height:12.75px;background:#b5ff44"><div class="cell" style="right:0;top:0;color:#000">773</div></div>
<div class="dc" style="left:405px;top:52.0px;width:37px;height:12.75px;background:#b5ff44"><div class="cell" style="right:0;top:0;color:#000">773</div></div>
<div class="dc" style="left:405px;top:64.75px;width:37px;height:12.75px;background:#b5ff44"><div class="cell" style="right:0;top:0;color:#000">773</div></div>
<div class="dc" style="left:405px;top:77.5px;width:37px;height:12.75px;background:#b7ff42"><div class="cell" style="right:0;top:0;color:#000">780</div></div>
<div class="dc" style="left:405px;top:90.25px;width:37px;height:12.75px;background:#b5ff44"><div class="cell" style="right:0;top:0;color:#000">773</div></div>
<div class="dc" style="left:405px;top:103.0px;width:37px;height:12.75px;background:#b9ff40"><div class="cell" style="right:0;top:0;color:#000">791</div></div>
<div class="dc" style="left:405px;top:115.75px;width:37px;height:12.75px;background:#bdff3c"><div class="cell" style="right:0;top:0;color:#000">806</div></div>
<div class="dc" style="left:405px;top:128.5px;width:37px;height:12.75px;background:#c0ff39"><div class="cell" style="right:0;top:0;color:#000">818</div></div>
<div class="dc" style="left:405px;top:141.25px;width:37px;height:12.75px;background:#c0ff39"><div class="cell" style="right:0;top:0;color:#000">818</div></div>
<div class="dc" style="left:405px;top:154.0px;width:37px;height:12.75px;background:#c1ff38"><div class="cell" style="right:0;top:0;color:#000">825</div></div>
<div class="dc" style="left:405px;top:166.75px;width:37px;height:12.75px;background:#c3ff36"><div class="cell" style="right:0;top:0;color:#000">833</div></div>
<div class="dc" style="left:405px;top:179.5px;width:37px;height:12.75px;background:#c9ff30"><div class="cell" style="right:0;top:0;color:#000">859</div></div>
<div class="dc" style="left:405px;top:192.25px;width:37px;height:12.75px;background:#cbff2e"><div class="cell" style="right:0;top:0;color:#000">866</div></div>
<div class="dc" style="left:405px;top:205.0px;width:37px;height:12.75px;background:#d3ff26"><div class="cell" style="right:0;top:0;color:#000">900</div></div>
<div class="dc" style="left:405px;top:217.75px;width:37px;height:12.75px;background:#d5ff24"><div class="cell" style="right:0;top:0;color:#000">908</div></div>
<div class="dc" style="left:405px;top:230.5px;width:37px;height:12.75px;background:#d6ff23"><div class="cell" style="right:0;top:0;color:#000">911</div></div>
<div class="dc" style="left:405px;top:243.25px;width:37px;height:12.75px;background:#d6ff23"><div class="cell" style="right:0;top:0;color:#000">911</div></div>
<div class="dc" style="left:405px;top:256.0px;width:37px;height:12.75px;background:#d7ff22"><div class="cell" style="right:0;top:0;color:#000">915</div></div>
<div class="dc" style="left:405px;top:268.75px;width:37px;height:12.75px;background:#d8ff21"><div class="cell" style="right:0;top:0;color:#000">923</div></div>
<div class="dc" style="left:405px;top:281.5px;width:37px;height:12.75px;background:#d9ff20"><div class="cell" style="right:0;top:0;color:#000">926</div></div>
<div class="hc" style="left:442px;top:1.0px;width:37px;height:12.75px"><div class="t" style="left:2px;top:2px">B12</div></div>
<div class="hc" style="left:442px;top:13.75px;width:37px;height:12.75px"><div class="cell" style="right:0;top:1px">1277</div></div>
<div class="hc" style="left:442px;top:26.5px;width:37px;height:12.75px"><div class="cell" style="right:0;top:1px"></div></div>
<div class="dc" style="left:442px;top:39.25px;width:37px;height:12.75px;background:#ceff2b"><div class="cell" style="right:0;top:0;color:#000">880</div></div>
<div class="dc" style="left:442px;top:52.0px;width:37px;height:12.75px;background:#ceff2b"><div class="cell" style="right:0;top:0;color:#000">880</div></div>
<div class="dc" style="left:442px;top:64.75px;width:37px;height:12.75px;background:#cfff2a"><div class="cell" style="right:0;top:0;color:#000">885</div></div>
<div class="dc" style="left:442px;top:77.5px;width:37px;height:12.75px;background:#d1ff28"><div class="cell" style="right:0;top:0;color:#000">890</div></div>
<div class="dc" style="left:442px;top:90.25px;width:37px;height:12.75px;background:#d2ff27"><div class="cell" style="right:0;top:0;color:#000">895</div></div>
<div class="dc" style="left:442px;top:103.0px;width:37px;height:12.75px;background:#d3ff26"><div class="cell" style="right:0;top:0;color:#000">900</div></div>
<div class="dc" style="left:442px;top:115.75px;width:37px;height:12.75px;background:#d5ff24"><div class="cell" style="right:0;top:0;color:#000">910</div></div>
<div class="dc" style="left:442px;top:128.5px;width:37px;height:12.75px;background:#d9ff20"><div class="cell" style="right:0;top:0;color:#000">925</div></div>
<div class="dc" style="left:442px;top:141.25px;width:37px;height:12.75px;background:#dbff1e"><div class="cell" style="right:0;top:0;color:#000">935</div></div>
<div class="dc" style="left:442px;top:154.0px;width:37px;height:12.75px;background:#deff1b"><div class="cell" style="right:0;top:0;color:#000">945</div></div>
<div class="dc" style="left:442px;top:166.75px;width:37px;height:12.75px;background:#e1ff18"><div class="cell" style="right:0;top:0;color:#000">960</div></div>
<div class="dc" style="left:442px;top:179.5px;width:37px;height:12.75px;background:#eeff0b"><div class="cell" style="right:0;top:0;color:#000">1017</div></div>
<div class="dc" style="left:442px;top:192.25px;width:37px;height:12.75px;background:#f0ff09"><div class="cell" style="right:0;top:0;color:#000">1024</div></div>
<div class="dc" style="left:442px;top:205.0px;width:37px;height:12.75px;background:#f8ff01"><div class="cell" style="right:0;top:0;color:#000">1056</div></div>
<div class="dc" style="left:442px;top:217.75px;width:37px;height:12.75px;background:#fcff00"><div class="cell" style="right:0;top:0;color:#000">1073</div></div>
<div class="dc" style="left:442px;top:230.5px;width:37px;height:12.75px;background:#fcff00"><div class="cell" style="right:0;top:0;color:#000">1075</div></div>
<div class="dc" style="left:442px;top:243.25px;width:37px;height:12.75px;background:#feff00"><div class="cell" style="right:0;top:0;color:#000">1085</div></div>
<div class="dc" style="left:442px;top:256.0px;width:37px;height:12.75px;background:#ffff00"><div class="cell" style="right:0;top:0;color:#000">1100</div></div>
<div class="dc" style="left:442px;top:268.75px;width:37px;height:12.75px;background:#ffff00"><div class="cell" style="right:0;top:0;color:#000">1110</div></div>
<div class="dc" style="left:442px;top:281.5px;width:37px;height:12.75px;background:#ffff00"><div class="cell" style="right:0;top:0;color:#000">1112</div></div>
</div>
<div class="a" style="left:1px;top:405px;width:462px;height:10px;background:#e8e6e2"></div>
<div class="a" style="left:1px;top:405px;width:10px;height:10px;background:#d4d0c8;border-right:1px solid #404040;border-bottom:1px solid #404040;box-shadow:inset 1px 1px 0 #fff,inset -1px -1px 0 #808080"></div>
<div class="a" style="left:11px;top:405px;width:10px;height:10px;background:#d4d0c8;border-right:1px solid #404040;border-bottom:1px solid #404040;box-shadow:inset 1px 1px 0 #fff,inset -1px -1px 0 #808080"></div>
<div class="a" style="left:452px;top:405px;width:10px;height:10px;background:#d4d0c8;border-right:1px solid #404040;border-bottom:1px solid #404040;box-shadow:inset 1px 1px 0 #fff,inset -1px -1px 0 #808080"></div>
<svg class="a" style="left:4px;top:407px" width="4" height="6"><path d="M3.5,0.5 L0.5,3 L3.5,5.5Z" fill="#000"/></svg>
<svg class="a" style="left:455px;top:407px" width="4" height="6"><path d="M0.5,0.5 L3.5,3 L0.5,5.5Z" fill="#000"/></svg>
<div class="a" style="left:465px;top:77px;width:133px;height:320px;background:#fff;border-left:1px solid #808080;border-top:1px solid #808080;border-right:1px solid #fff;border-bottom:1px solid #fff"></div>
<div class="a" style="left:466px;top:78px;width:131px;height:318px;border-left:1px solid #404040;border-top:1px solid #404040;border-right:1px solid #e4e2dc;border-bottom:1px solid #e4e2dc"></div>
<div class="a" style="left:462px;top:77px;width:2px;height:320px;background:#eceae6"></div>
<div class="hc" style="left:467px;top:79px;width:77px;height:14px"><div class="t" style="left:1px;top:2px">Data Type</div></div>
<div class="hc" style="left:544px;top:79px;width:52px;height:14px"><div class="t" style="left:1px;top:2px">Value</div></div>
<div class="a" style="left:543.5px;top:93px;width:1px;height:255px;background:#d0d0d0"></div>
<div class="a" style="left:467px;top:107px;width:129px;height:1px;background:#d8d8d8"></div>
<div class="t" style="left:468px;top:95px">Engine Speed</div>
<div class="t" style="left:546px;top:95px;">1155 rpm</div>
<div class="a" style="left:467px;top:122px;width:129px;height:1px;background:#d8d8d8"></div>
<div class="t" style="left:468px;top:110px">Vehicle Speed</div>
<div class="t" style="left:546px;top:110px;">0.0 Mph</div>
<div class="a" style="left:467px;top:137px;width:129px;height:1px;background:#d8d8d8"></div>
<div class="t" style="left:468px;top:125px">Gear</div>
<div class="t" style="left:546px;top:125px;">0</div>
<div class="a" style="left:467px;top:152px;width:129px;height:1px;background:#d8d8d8"></div>
<div class="t" style="left:468px;top:140px">Manifold Pressure</div>
<div class="t" style="left:546px;top:140px;">381 mbar</div>
<div class="a" style="left:467px;top:167px;width:129px;height:1px;background:#d8d8d8"></div>
<div class="t" style="left:468px;top:155px">Boost</div>
<div class="t" style="left:546px;top:155px;">0.0 psi</div>
<div class="a" style="left:467px;top:182px;width:129px;height:1px;background:#d8d8d8"></div>
<div class="t" style="left:468px;top:170px">Throttle Position</div>
<div class="t" style="left:546px;top:170px;">2%</div>
<div class="a" style="left:467px;top:197px;width:129px;height:1px;background:#d8d8d8"></div>
<div class="t" style="left:468px;top:185px">Injector Duration</div>
<div class="t" style="left:546px;top:185px;">2.76 ms</div>
<div class="a" style="left:467px;top:212px;width:129px;height:1px;background:#d8d8d8"></div>
<div class="t" style="left:468px;top:200px">Duty Cycle</div>
<div class="a" style="left:545px;top:198px;width:51px;height:14px;background:#00fff0"></div>
<div class="t" style="left:546px;top:200px;">3%</div>
<div class="a" style="left:467px;top:227px;width:129px;height:1px;background:#d8d8d8"></div>
<div class="t" style="left:468px;top:215px">Ignition Advance</div>
<div class="t" style="left:546px;top:215px;">23.50°</div>
<div class="a" style="left:467px;top:242px;width:129px;height:1px;background:#d8d8d8"></div>
<div class="t" style="left:468px;top:230px">Knock Retard</div>
<div class="t" style="left:546px;top:230px;">NONE</div>
<div class="a" style="left:467px;top:257px;width:129px;height:1px;background:#d8d8d8"></div>
<div class="t" style="left:468px;top:245px">Air Temperature</div>
<div class="t" style="left:546px;top:245px;">89.42 °F</div>
<div class="a" style="left:467px;top:272px;width:129px;height:1px;background:#d8d8d8"></div>
<div class="t" style="left:468px;top:260px">Coolant Temperature</div>
<div class="t" style="left:546px;top:260px;">163.62 °F</div>
<div class="a" style="left:467px;top:287px;width:129px;height:1px;background:#d8d8d8"></div>
<div class="t" style="left:468px;top:275px">O2 Voltage</div>
<div class="t" style="left:546px;top:275px;">3.45V</div>
<div class="a" style="left:467px;top:302px;width:129px;height:1px;background:#d8d8d8"></div>
<div class="t" style="left:468px;top:290px">Air Fuel Ratio</div>
<div class="a" style="left:545px;top:288px;width:51px;height:14px;background:#e4f800"></div>
<div class="t" style="left:546px;top:290px;">15.44</div>
<div class="a" style="left:467px;top:317px;width:129px;height:1px;background:#d8d8d8"></div>
<div class="t" style="left:468px;top:305px">VTEC</div>
<div class="t" style="left:546px;top:305px;">OFF</div>
<div class="a" style="left:467px;top:332px;width:129px;height:1px;background:#d8d8d8"></div>
<div class="t" style="left:468px;top:320px">CEL</div>
<div class="t" style="left:546px;top:320px;color:#208020;">OFF</div>
<div class="a" style="left:467px;top:347px;width:129px;height:1px;background:#d8d8d8"></div>
<div class="t" style="left:468px;top:335px">Playback Duration</div>
<div class="t" style="left:546px;top:335px;">00:00:00.000</div>
<div class="a" style="left:470px;top:400px;width:125px;height:11px;background:#fff;border-top:2px solid #404040;border-left:1px solid #808080"></div>
<div class="a" style="left:470px;top:399px;width:7px;height:14px;background:#d4d0c8;border-right:1px solid #404040;border-bottom:1px solid #404040;box-shadow:inset 1px 1px 0 #fff,inset -1px -1px 0 #808080"></div>
<div class="a" style="left:0;top:415px;width:600px;height:1px;background:#fff"></div>
<div class="sep" style="left:62px;top:419px;height:15px"></div>
<div class="sep" style="left:142px;top:419px;height:15px"></div>
<div class="sep" style="left:206px;top:419px;height:15px"></div>
<div class="t" style="left:84px;top:422px;color:#000">L<u>i</u>ve Tuning...</div>
<div class="t" style="left:229px;top:422px;color:#a4a09a;text-shadow:0.75px 0.75px 0 #fff">Live Auto-Adjustments</div>
<div class="t" style="left:329px;top:422px;color:#000"><u>A</u>uto-Adjust Maps</div>
<div class="t" style="left:413px;top:422px;color:#000"><u>C</u>lear Recordings</div>
<div class="a" style="left:0;top:437px;width:263px;height:13px;border-left:1px solid #808080;border-top:1px solid #808080;border-right:1px solid #fff;border-bottom:1px solid #fff"></div>
<div class="a" style="left:264px;top:437px;width:224px;height:13px;border-left:1px solid #808080;border-top:1px solid #808080;border-right:1px solid #fff;border-bottom:1px solid #fff"></div>
<div class="a" style="left:489px;top:437px;width:111px;height:13px;border-left:1px solid #808080;border-top:1px solid #808080;border-bottom:1px solid #fff"></div>
<div class="t" style="left:3px;top:439px;transform:scaleX(0.835)">BOOST Tools+ P30</div>
<div class="t" style="left:266px;top:439px;transform:scaleX(0.78)">&gt;Boosted &gt;Final Multiplier</div>
</div></body></html>
